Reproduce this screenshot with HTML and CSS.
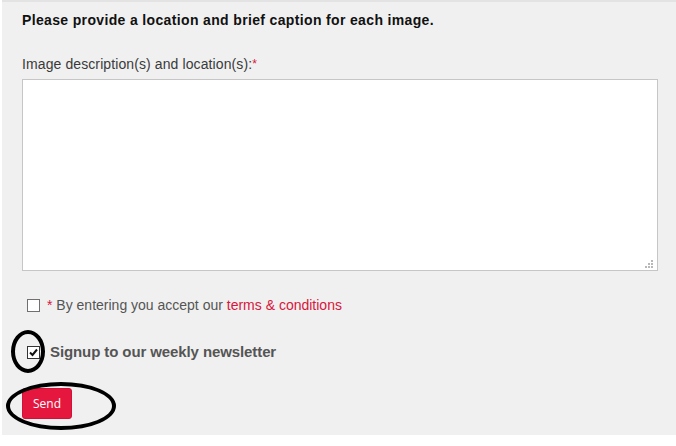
FILE: index.html
```html
<!DOCTYPE html>
<html>
<head>
<meta charset="utf-8">
<link rel="stylesheet" href="styles.css">
</head>
<body>
<form class="panel">
  <p class="intro">Please provide a location and brief caption for each image.</p>
  <label class="field-label" for="desc">Image description(s) and location(s):<span class="req">*</span></label>
  <div class="area-wrap">
    <textarea id="desc" class="area"></textarea>
    <svg class="grip" width="9" height="9" viewBox="0 0 9 9" aria-hidden="true">
      <rect x="6" y="0" width="2" height="2" fill="#b8b8b8"/>
      <rect x="3" y="3" width="2" height="2" fill="#b8b8b8"/>
      <rect x="6" y="3" width="2" height="2" fill="#b8b8b8"/>
      <rect x="0" y="6" width="2" height="2" fill="#b8b8b8"/>
      <rect x="3" y="6" width="2" height="2" fill="#b8b8b8"/>
      <rect x="6" y="6" width="2" height="2" fill="#b8b8b8"/>
    </svg>
  </div>
  <div class="check-row terms">
    <span class="box"></span>
    <span class="terms-text"><span class="req">*</span> By entering you accept our <a class="link" href="#">terms &amp; conditions</a></span>
  </div>
  <div class="check-row news">
    <span class="box checked">
      <svg width="11" height="11" viewBox="0 0 11 11" aria-hidden="true"><path d="M2 5.5 L4.5 8 L9 2.5" fill="none" stroke="#111" stroke-width="2"/></svg>
    </span>
    <span class="news-text">Signup to our weekly newsletter</span>
  </div>
  <button type="button" class="send">Send</button>
</form>
<div class="mark mark-check"></div>
<div class="mark mark-send"></div>
</body>
</html>
```
FILE: styles.css
```css
html, body {
  margin: 0;
  padding: 0;
  background: #ffffff;
}
body {
  font-family: "Liberation Sans", Arial, sans-serif;
  position: relative;
  width: 676px;
  height: 446px;
  overflow: hidden;
}
.panel {
  margin: 0 0 0 2px;
  background: #f0f0f0;
  border-top: 2px solid #e3e3e3;
  padding: 9px 18px 16px 20px;
  display: flex;
  flex-direction: column;
  align-items: flex-start;
  height: 408px;
}
.intro {
  margin: 0;
  font-size: 14px;
  font-weight: bold;
  line-height: 18px;
  color: #111;
  letter-spacing: 0.35px;
}
.field-label {
  margin-top: 26px;
  font-size: 14px;
  line-height: 18px;
  color: #3a3a3a;
  letter-spacing: 0.1px;
}
.req {
  color: #d8163c;
  font-size: 12px;
  vertical-align: top;
}
.terms-text .req {
  font-size: 14px;
  vertical-align: baseline;
}
.area-wrap {
  position: relative;
  margin-top: 6px;
  width: 636px;
  height: 192px;
}
.area {
  box-sizing: border-box;
  width: 636px;
  height: 192px;
  margin: 0;
  border: 1px solid #c6c6c6;
  background: #fff;
  resize: none;
  display: block;
}
.grip {
  position: absolute;
  right: 4px;
  bottom: 2px;
}
.check-row {
  display: flex;
  align-items: center;
}
.terms {
  margin-top: 26px;
  margin-left: 5px;
  gap: 7px;
  height: 16px;
}
.news {
  margin-top: 31px;
  margin-left: 5px;
  gap: 10px;
  height: 16px;
}
.box {
  box-sizing: border-box;
  width: 13px;
  height: 13px;
  border: 1px solid #707070;
  background: #fff;
  display: flex;
  align-items: center;
  justify-content: center;
}
.box.checked {
  border-color: #333;
}
.terms-text {
  font-size: 14px;
  color: #555;
  line-height: 16px;
}
.link {
  color: #d8163c;
  text-decoration: none;
}
.news-text {
  font-size: 15px;
  font-weight: bold;
  color: #555;
  line-height: 16px;
  letter-spacing: -0.1px;
}
.send {
  margin-top: 28px;
  width: 50px;
  height: 31px;
  background: #e6173f;
  border: 1px solid #d01236;
  border-radius: 3px;
  color: #fff;
  font-family: "Open Sans", "DejaVu Sans", sans-serif;
  font-size: 12px;
  padding: 0;
}
.mark {
  position: absolute;
  box-sizing: border-box;
  border: 4px solid #000;
  border-radius: 50%;
}
.mark-check {
  left: 11px;
  top: 330px;
  width: 34px;
  height: 43px;
}
.mark-send {
  left: 6px;
  top: 382px;
  width: 110px;
  height: 48px;
}
```
